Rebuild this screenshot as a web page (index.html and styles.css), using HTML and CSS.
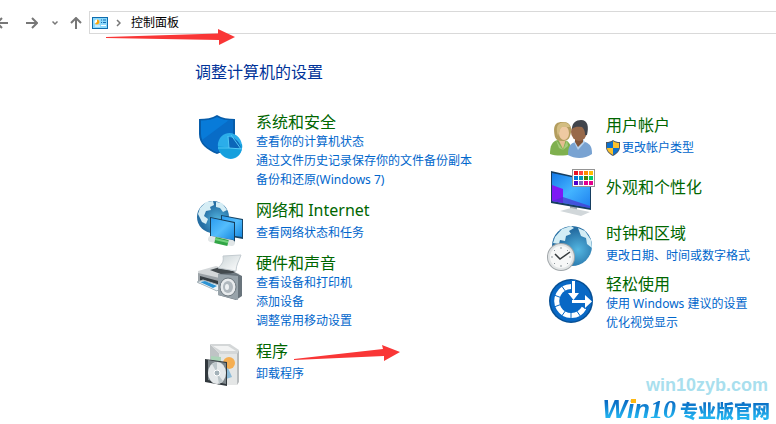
FILE: index.html
```html
<!DOCTYPE html>
<html lang="zh-CN">
  <head>
    <meta charset="UTF-8" />
    <meta name="viewport" content="width=device-width, initial-scale=1.0" />
    <title>控制面板</title>
    <link rel="stylesheet" href="styles.css">
  </head>
  <body>
    <header class="toolbar">
      <nav class="nav">
        <button class="nav-btn back" aria-label="后退">
          <svg width="12" height="12" viewBox="0 0 12 12"><path d="M12 6H1M6 1L1 6l5 5" /></svg>
        </button>
        <button class="nav-btn forward" aria-label="前进">
          <svg width="12" height="12" viewBox="0 0 12 12"><path d="M0 6h11M6 1l5 5-5 5" /></svg>
        </button>
        <button class="nav-btn recent" aria-label="最近浏览的位置">
          <svg width="6" height="12" viewBox="0 0 6 12"><path d="M0.500 4.500L3 7l2.500-2.500" /></svg>
        </button>
        <button class="nav-btn up" aria-label="上移">
          <svg width="12" height="12" viewBox="0 0 12 12"><path d="M6 12V1M1 6l5-5 5 5" /></svg>
        </button>
      </nav>
      <div class="address">
        <svg width="16" height="12" viewBox="0 0 16 12">
          <rect width="16" height="12" fill="#0d6cae" />
          <rect x="1" y="1" width="14" height="10" fill="#8ad8fb" />
          <circle cx="5" cy="5" r="2.500" fill="#fff" />
          <path d="M5 5V2.500A2.500 2.500 0 1 1 3 6.500z" fill="#f5a50c" />
          <path d="M9 3h1M11 3h3M9 5.500h1M11 5.500h3" stroke="#146eb4" />
          <path d="M3 9h5M9 8.500h5" stroke="#fff" />
        </svg>
        <svg class="crumb" width="5" height="8" viewBox="0 0 5 8"><path d="M1 1l3 3-3 3" /></svg>
        <span>控制面板</span>
      </div>
    </header>

    <main class="panel">
      <h1>调整计算机的设置</h1>
      <div class="columns">
        <div class="column left">
          <section class="item">
            <svg class="icon" viewBox="0 0 48 48">
              <path d="M3 7c7 0 13-1 18-4 5 3 11 4 18 4v15c0 10-8 16-18 20C11 38 3 32 3 22z" fill="#075ca9" />
              <path d="M5 8.500c6 0 12-1 16-3.500 4 2.500 10 3.500 16 3.500V22c0 9-7 14-16 18C12 36 5 31 5 22z" fill="#087bd9" />
              <path d="M6 28L33 8l4 .5V22c0 9-7 14-16 18-8-4-13-7-15-12z" fill="#086cc7" />
              <ellipse cx="34" cy="34" rx="12" ry="13" transform="rotate(-20 34 34)" fill="#2badea" />
              <path d="M22 34c1 9 9 14 16 12 6-2 9-8 8-14L35 36z" fill="#159fdd" />
              <path d="M33 36l-1-11c7 0 11 4 13 11z" fill="#0b66b9" />
              <path d="M22 36l11 0-1-12M33 36l13 1M35 23l10 14" fill="none" stroke="#53c7f5" />
            </svg>
            <div class="text">
              <h2><a href="#">系统和安全</a></h2>
              <a href="#">查看你的计算机状态</a>
              <a href="#">通过文件历史记录保存你的文件备份副本</a>
              <a href="#">备份和还原(Windows 7)</a>
            </div>
          </section>

          <section class="item single">
            <svg class="icon" viewBox="0 0 48 48">
              <defs>
                <radialGradient id="globe" cx="65%" cy="60%">
                  <stop offset="0" stop-color="#54b7e2" />
                  <stop offset="1" stop-color="#256ea3" />
                </radialGradient>
                <linearGradient id="screen" x1="0" y1="0" x2="1" y2="1">
                  <stop offset="0" stop-color="#2b9cf0" />
                  <stop offset="0.500" stop-color="#54bdfc" />
                  <stop offset="1" stop-color="#1687df" />
                </linearGradient>
              </defs>
              <circle cx="17" cy="20" r="16" fill="url(#globe)" />
              <path d="M4 11l6-6 7-1 1 4-4 2 1 3-5 1-2 5 4 3-2 5-4-2-4-8zM20 5l6 1 5 7-4 2-3-4-4-1z" fill="#d5edf5" />
              <path d="M25 18l22 4v20l-22-4z" fill="#174465" />
              <path d="M26 19l20 4v17l-20-3z" fill="url(#screen)" />
              <path d="M14 20l25 5v21l-25-5z" fill="#153c59" />
              <path d="M15 21l23 5v17l-23-4z" fill="url(#screen)" />
              <path d="M15 42l21 4" stroke="#e1e6e7" stroke-width="6" stroke-linecap="round" />
              <path d="M19 43l13 3" stroke="#31a545" stroke-width="6" />
              <path d="M19 42l13 3" stroke="#73d27d" stroke-width="2" />
            </svg>
            <div class="text">
              <h2><a href="#">网络和 Internet</a></h2>
              <a href="#">查看网络状态和任务</a>
            </div>
          </section>

          <section class="item">
            <svg class="icon" viewBox="0 0 48 48">
              <defs>
                <linearGradient id="paper" x1="0" y1="0" x2="1" y2="1">
                  <stop offset="0" stop-color="#c9d3d6" />
                  <stop offset="1" stop-color="#fff" />
                </linearGradient>
              </defs>
              <path d="M2 18l18-5 24 8-16 6-26-6z" fill="#d3d7d9" />
              <path d="M14 17l10-3 16 5-10 4z" fill="#434a4e" />
              <path d="M27 3l18-1c-2 6-5 10-5 16l-18-3c4-4 6-6 5-12z" fill="url(#paper)" stroke="#c3cbd0" />
              <path d="M2 20l26 6v13L2 30z" fill="#9ca3a8" />
              <path d="M4 23l22 6v6L4 28z" fill="#353d42" />
              <path d="M1 29l6-2 19 6-5 5z" fill="#edf4f8" stroke="#a7b4bb" />
              <path d="M4 29l5-1 12 5-4 2z" fill="#2c93d3" />
              <path d="M22 21l18-1 6 3v20l-6 4-18-5z" fill="#69747c" />
              <path d="M22 21l20 2v24l-20-5z" fill="#98a3aa" />
              <ellipse cx="32" cy="34" rx="8" ry="9" fill="#e8ebed" stroke="#707a81" />
              <ellipse cx="32" cy="34" rx="5" ry="6" fill="#b0b8be" />
              <ellipse cx="31" cy="34" rx="2" ry="3" fill="#eef1f3" />
            </svg>
            <div class="text">
              <h2><a href="#">硬件和声音</a></h2>
              <a href="#">查看设备和打印机</a>
              <a href="#">添加设备</a>
              <a href="#">调整常用移动设置</a>
            </div>
          </section>

          <section class="item single">
            <svg class="icon" viewBox="0 0 48 48">
              <path d="M14 6l9 9v32l-9-6z" fill="#bfc3c5" />
              <path d="M23 15h18v32H23z" fill="#e4e6e6" />
              <path d="M41 15l2-3v32l-2 3z" fill="#b6babc" />
              <path d="M14 6h20l9 6-2 4H24z" fill="#d4d7d8" />
              <path d="M17 8h15l8 5H25z" fill="#f2f3f3" />
              <circle cx="33" cy="25" r="6" fill="#f5ae52" />
              <path d="M15 18l10 1v18l-10-2z" fill="#abd4b8" />
              <path d="M27 34l5-4 4 9-9 3z" fill="#8dbbd8" />
              <path d="M9 21l22 3v24L9 44z" fill="#31383d" />
              <path d="M12 22l18 3v21l-18-4z" fill="#7d868b" />
              <ellipse cx="21" cy="35" rx="9" ry="11" fill="#e4e8ea" />
              <path d="M21 35l-5-9 5-2zM21 35l6 8-4 3z" fill="#bcc6ca" />
              <ellipse cx="21" cy="35" rx="3" ry="3" fill="#a3b1b8" stroke="#fff" />
            </svg>
            <div class="text">
              <h2><a href="#">程序</a></h2>
              <a href="#">卸载程序</a>
            </div>
          </section>
        </div>

        <div class="column right">
          <section class="item single">
            <svg class="icon" viewBox="0 0 48 48">
              <path d="M4 42c0-8 2-13 8-14l9 1c3 2 5 6 5 13-8 2-16 2-22 0z" fill="#7fb04e" />
              <path d="M12 27h8l-3 10z" fill="#e4bd90" />
              <path d="M10 28l7 10-4-2zM21 28l-4 10 5-4z" fill="#a5cc7c" />
              <path d="M9 25C8 19 6 10 16 10c9-1 11 7 8 14-1 4-4 5-8 5-3 0-6-1-7-4z" fill="#b39d5e" />
              <ellipse cx="18" cy="21" rx="5" ry="7" fill="#eec9a2" />
              <path d="M12 24c2-4 1-6 4-9h8c-1-5-9-6-12-2-2 3-1 7 0 11z" fill="#d3bd82" />
              <path d="M22 43c0-8 2-12 8-13h9c6 2 7 6 7 12-7 5-17 5-24 1z" fill="#79a3d2" />
              <path d="M28 30l4 8 7-8-2-3h-7z" fill="#b7d2ed" />
              <path d="M29 27h8v3l-5 5-3-5z" fill="#81553a" />
              <ellipse cx="33" cy="20" rx="8" ry="9" fill="#98694a" />
              <path d="M26 17c0-6 4-9 9-9 7 0 8 7 6 15h-2c0-4-1-6-3-8-4 0-6-1-10 2z" fill="#41454c" />
            </svg>
            <div class="text">
              <h2><a href="#">用户帐户</a></h2>
              <a href="#" class="with-shield">
                <svg width="14" height="16" viewBox="0 0 14 16">
                  <path d="M7 0c2 1.500 4 2 7 2v5c0 4-3 7-7 9-4-2-7-5-7-9V2c3 0 5-.5 7-2z" fill="#515a62" />
                  <path d="M7 1v7H1V3c2 0 4-.5 6-2zM7 8h6c0 3-3 5-6 7z" fill="#0c70cc" />
                  <path d="M7 1c2 1.500 4 2 6 2v5H7zM1 8h6v7c-3-2-6-4-6-7z" fill="#fcc12c" />
                </svg>更改帐户类型</a>
            </div>
          </section>

          <section class="item lone">
            <svg class="icon" viewBox="0 0 48 48">
              <defs>
                <linearGradient id="desk" x1="0" y1="0" x2="1" y2="1">
                  <stop offset="0" stop-color="#1579e8" />
                  <stop offset="0.500" stop-color="#43b4ff" />
                  <stop offset="1" stop-color="#1e80ef" />
                </linearGradient>
              </defs>
              <path d="M24 38l7 2v6l-7-1z" fill="#a0a9ae" />
              <path d="M14 45l11-3 19 4-9 4z" fill="#d1d7da" />
              <path d="M5 5l40 9v30L5 37z" fill="#163e60" />
              <path d="M6 7l38 8v27L6 35z" fill="url(#desk)" />
              <path d="M6 19l11 4v14L6 35z" fill="#7d19f5" />
              <path d="M6 35l38 7v-2L17 31z" fill="#4a35ce" opacity=".7" />
              <rect x="26.500" y="3.500" width="22" height="17" fill="#fff" stroke="#949494" />
              <path d="M28 7h4" stroke="#e81123" stroke-width="4" />
              <path d="M33 7h4" stroke="#ff4343" stroke-width="4" />
              <path d="M38 7h4" stroke="#ff8c00" stroke-width="4" />
              <path d="M43 7h4" stroke="#ffb900" stroke-width="4" />
              <path d="M28 12h4" stroke="#0078d7" stroke-width="4" />
              <path d="M33 12h4" stroke="#0099bc" stroke-width="4" />
              <path d="M38 12h4" stroke="#498205" stroke-width="4" />
              <path d="M43 12h4" stroke="#00cc6a" stroke-width="4" />
              <path d="M28 17h4" stroke="#5000c8" stroke-width="4" />
              <path d="M33 17h4" stroke="#8764b8" stroke-width="4" />
              <path d="M38 17h4M43 17h4" stroke="#e3008c" stroke-width="4" />
            </svg>
            <div class="text">
              <h2><a href="#">外观和个性化</a></h2>
            </div>
          </section>

          <section class="item single">
            <svg class="icon" viewBox="0 0 48 48">
              <circle cx="26" cy="26" r="20" fill="url(#globe)" />
              <path d="M9 17l7-8 9-3 3 2-5 3 2 3-5 2-1 5-5-1-1 4-6-1zM32 8l7 3 6 9 1 8-5-4-1-6-5-2z" fill="#d3edf5" />
              <circle cx="15" cy="37" r="14" fill="#a0a6a9" />
              <circle cx="15" cy="37" r="13" fill="#e2e5e6" />
              <circle cx="15" cy="37" r="11" fill="#f7f8f8" />
              <path d="M15 27v2M15 45v2M5 37h2M23 37h2M8 30l1 1M21 43l1 1M8 44l1-1M21 31l1-1" stroke="#8c969b" />
              <path d="M9 34l5 5 10-7" fill="none" stroke="#343a3d" stroke-width="1.500" />
            </svg>
            <div class="text">
              <h2><a href="#">时钟和区域</a></h2>
              <a href="#">更改日期、时间或数字格式</a>
            </div>
          </section>

          <section class="item">
            <svg class="icon" viewBox="0 0 48 48">
              <circle cx="25" cy="27" r="22" fill="#064f94" />
              <circle cx="25" cy="27" r="20.500" fill="#0868c5" />
              <path d="M25 12.500A14.500 14.500 0 1 0 38 34" fill="none" stroke="#fff" stroke-width="5" />
              <path d="M25 45V36M15 43l5-7M8 33l8-3M8 21l8 3M15 11l5 7M35 43l-5-7" stroke="#0868c5" />
              <path d="M25 6h5v12h5v7h3v-5l9 7-9 8v-5H25l-6-9v-3h6z" fill="#0868c5" />
              <path d="M26 7h3v12h4l-5.500 7L22 19h4zM26 26h13v-5l7 6.500-7 6.500v-5H26z" fill="#fff" />
            </svg>
            <div class="text">
              <h2><a href="#">轻松使用</a></h2>
              <a href="#">使用 Windows 建议的设置</a>
              <a href="#">优化视觉显示</a>
            </div>
          </section>
        </div>
      </div>
    </main>

    <!-- red pointers over the page -->
    <svg class="pointer pointer-address" width="130" height="16" viewBox="0 0 130 16"><path d="M0 8l112-3.500V0l17 8-16 8v-5L0 9z" /></svg>
    <svg class="pointer pointer-program" width="106" height="16" viewBox="0 0 106 16"><path d="M0 14l89-10-1-4 18 7-16 9v-5L0 15z" /></svg>

    <div class="watermark">
      <div class="site">win10zyb.com</div>
      <div class="brand"><span class="win">Win<span class="ten">10</span></span><span class="name">专业版官网</span></div>
    </div>
  </body>
</html>
```
FILE: styles.css
```css
* {
  box-sizing: border-box;
}
body {
  margin: 0;
  position: relative;
  min-height: 100vh;
  background-color: #fff;
  color: #000;
  font-family: "Noto Sans", "Noto Sans CJK SC", sans-serif;
  font-size: 12px;
  line-height: 19px;
}
h1,
h2 {
  margin: 0;
  font-size: 16px;
  font-weight: normal;
  line-height: 20px;
}
a {
  color: #0066cc;
  text-decoration: none;
}
a:hover {
  text-decoration: underline;
}
svg {
  display: block;
  flex: none;
}

/* Toolbar */
.toolbar {
  display: flex;
  align-items: center;
  padding-top: 11px;
}
.nav {
  display: flex;
  align-items: center;
  width: 89px;
}
.nav-btn {
  padding: 0;
  border: none;
  background: none;
}
.nav-btn path,
.crumb path {
  fill: none;
  stroke: #777;
  stroke-width: 2;
}
.back {
  margin-left: -4px;
}
.forward {
  margin-left: 18px;
}
.recent {
  margin-left: 14px;
}
.up {
  margin-left: 12px;
}
.recent path,
.crumb path {
  stroke-width: 1.5;
}
.address {
  flex: 1;
  display: flex;
  align-items: center;
  height: 23px;
  padding-left: 2px;
  border: 1px solid #d9d9d9;
  border-right: none;
}
.crumb {
  margin: 0 10px 0 8px;
}

/* Categories */
.panel {
  padding: 28px 0 38px 195px;
}
h1 {
  color: #003399;
}
.columns {
  display: grid;
  grid-template-columns: 350px 1fr;
  padding: 30px 0 0 1px;
}
.column {
  display: flex;
  flex-direction: column;
}
.left {
  gap: 8px;
}
.right {
  gap: 6px;
}
.item {
  display: flex;
  gap: 12px;
  min-height: 48px;
}
.icon {
  width: 48px;
  height: 48px;
  overflow: visible;
}
.text {
  display: flex;
  flex-direction: column;
  align-items: flex-start;
  white-space: nowrap;
}
.single .text {
  padding-top: 3px;
  gap: 3px;
}
.lone .text {
  justify-content: center;
  padding-bottom: 6px;
}
.text h2 a {
  color: #006600;
}
.with-shield {
  display: flex;
  align-items: center;
  gap: 2px;
}

/* Pointers */
.pointer {
  position: absolute;
  fill: #f93636;
}
.pointer-address {
  left: 106px;
  top: 29px;
}
.pointer-program {
  left: 294px;
  top: 345px;
}

/* Watermark */
.watermark {
  position: absolute;
  top: 374px;
  right: 6px;
  text-align: right;
  font-weight: bold;
  white-space: nowrap;
}
.site {
  padding-right: 2px;
  color: #a9dfee;
  font-family: "Liberation Sans", sans-serif;
  font-size: 18px;
  line-height: 22px;
}
.brand {
  position: relative;
  display: flex;
  align-items: center;
  justify-content: flex-end;
  line-height: 26px;
}
/* yellow dot of the i */
.brand::after {
  content: "";
  position: absolute;
  left: 30px;
  top: 3px;
  width: 5px;
  height: 4px;
  background-color: #fdb813;
}
.win,
.name {
  color: transparent;
  background: linear-gradient(#0a6cc4 20%, #22b4f0 80%);
  -webkit-background-clip: text;
  background-clip: text;
}
.win {
  padding: 0 4px 0 2px;
  font-family: "Liberation Sans", sans-serif;
  font-size: 26px;
  font-style: italic;
}
.ten {
  font-family: "Liberation Serif", serif;
}
.name {
  font-family: "Noto Sans CJK SC", sans-serif;
  font-size: 18px;
  font-weight: 900;
}
```
